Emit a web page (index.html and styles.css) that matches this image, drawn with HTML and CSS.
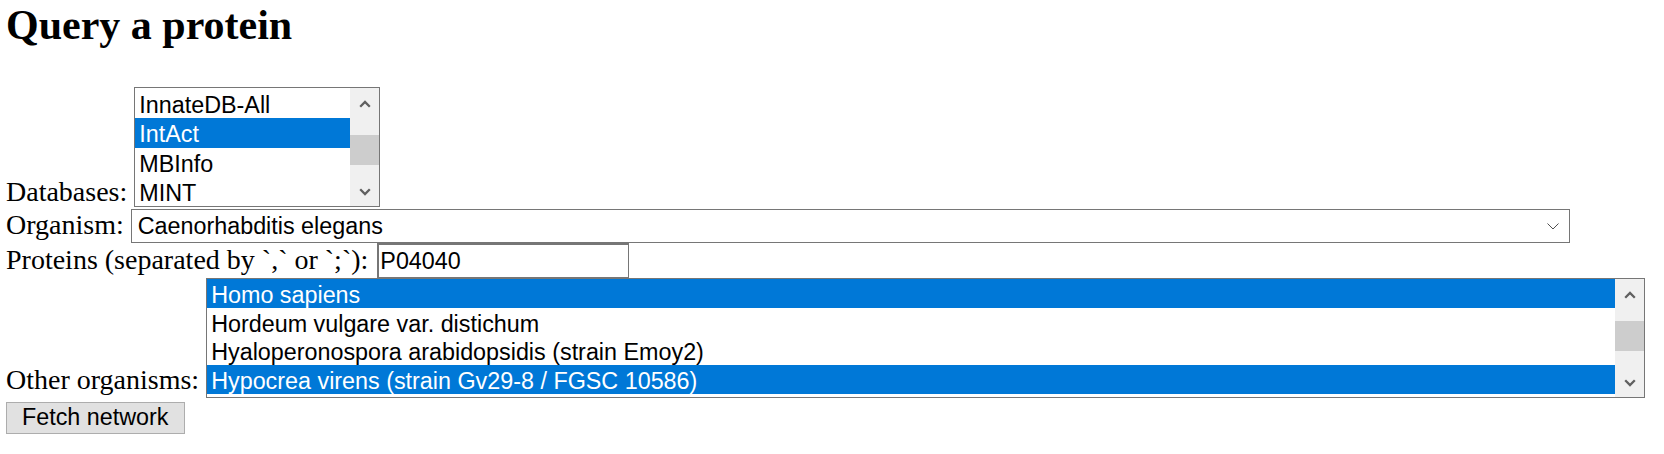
FILE: index.html
```
<!DOCTYPE html>
<html lang="en">
<head>
<meta charset="utf-8">
<title>Query a protein</title>
<link rel="stylesheet" href="styles.css">
</head>
<body>
<h2 class="title">Query a protein</h2>
<form class="query" action="#" onsubmit="return false;">
  <div class="row row-db">Databases: <div class="listbox listbox-db" role="listbox" aria-multiselectable="true">
      <div class="vscroll">
        <div class="sb-btn sb-up"><svg class="sb-arrow" width="12" height="8" viewBox="0 0 12 8"><polyline points="1.2,6.8 6,2 10.8,6.8"/></svg></div>
        <div class="sb-track"><div class="sb-thumb" style="margin-top:18px"></div></div>
        <div class="sb-btn sb-down"><svg class="sb-arrow" width="12" height="8" viewBox="0 0 12 8"><polyline points="1.2,1.2 6,6 10.8,1.2"/></svg></div>
      </div>
      <div class="opts opts-db">
        <div class="opt">InnateDB-All</div>
        <div class="opt selected">IntAct</div>
        <div class="opt">MBInfo</div>
        <div class="opt">MINT</div>
      </div>
    </div></div>
  <div class="row row-organism">Organism: <div class="select" role="combobox"><span class="select-value">Caenorhabditis elegans</span><svg class="select-chevron" width="12" height="7" viewBox="0 0 12 7"><polyline points="0.5,0.5 6,6 11.5,0.5"/></svg></div></div>
  <div class="row row-proteins">Proteins (separated by `,` or `;`): <input class="text-input" type="text" value="P04040"></div>
  <div class="row row-others">Other organisms: <div class="listbox listbox-org" role="listbox" aria-multiselectable="true">
      <div class="vscroll">
        <div class="sb-btn sb-up"><svg class="sb-arrow" width="12" height="8" viewBox="0 0 12 8"><polyline points="1.2,6.8 6,2 10.8,6.8"/></svg></div>
        <div class="sb-track"><div class="sb-thumb" style="margin-top:13px"></div></div>
        <div class="sb-btn sb-down"><svg class="sb-arrow" width="12" height="8" viewBox="0 0 12 8"><polyline points="1.2,1.2 6,6 10.8,1.2"/></svg></div>
      </div>
      <div class="opts opts-org">
        <div class="opt selected">Homo sapiens</div>
        <div class="opt">Hordeum vulgare var. distichum</div>
        <div class="opt">Hyaloperonospora arabidopsidis (strain Emoy2)</div>
        <div class="opt selected">Hypocrea virens (strain Gv29-8 / FGSC 10586)</div>
      </div>
    </div></div>
  <div class="row row-submit"><button class="btn" type="submit">Fetch network</button></div>
</form>
</body>
</html>
```
FILE: styles.css
```
* {
  box-sizing: border-box;
}

html {
  background: #ffffff;
}

body {
  margin: 0;
  padding: 1px 0 0 6px;
  font-family: "Liberation Serif", "Times New Roman", serif;
  font-size: 28px;
  color: #000000;
}

.title {
  font-size: 42px;
  font-weight: bold;
  margin: 0 0 38px 0;
}

.query {
  margin: 0;
}

.row {
  white-space: nowrap;
}

/* ---------- list boxes ---------- */
.listbox {
  display: inline-block;
  vertical-align: baseline;
  height: 120px;
  border: 1px solid #767676;
  background: #ffffff;
  font-family: "Liberation Sans", Arial, sans-serif;
  font-size: 23.33px;
  white-space: nowrap;
}

.listbox-db {
  width: 246px;
}

.listbox-org {
  width: 1439px;
}

.vscroll {
  float: right;
  width: 29px;
  height: 100%;
  background: #f0f0f0;
  display: flex;
  flex-direction: column;
}

.sb-btn {
  flex: none;
  height: 29px;
  display: flex;
  align-items: center;
  justify-content: center;
}

.sb-up {
  padding-top: 3px;
}

.sb-track {
  flex: 1;
}

.sb-thumb {
  height: 29.5px;
  background: #cdcdcd;
}

.sb-arrow polyline {
  fill: none;
  stroke: #606060;
  stroke-width: 2.3;
}

.opts {
  margin-right: 29px;
}

.opts-db {
  padding-top: 1px;
}

.opt {
  padding: 2px 0 0 4px;
}

.opts-db .opt {
  height: 29.25px;
  line-height: 29.25px;
}

.opts-org .opt {
  height: 28.6px;
  line-height: 28.6px;
}

.opt.selected {
  background: #0078d7;
  color: #ffffff;
}

/* ---------- single select ---------- */
.select {
  display: inline-flex;
  align-items: center;
  justify-content: space-between;
  vertical-align: baseline;
  width: 1439px;
  height: 34.5px;
  margin-top: 1px;
  padding: 0 10px 0 6px;
  border: 1px solid #767676;
  background: #ffffff;
  font-family: "Liberation Sans", Arial, sans-serif;
  font-size: 23.33px;
}

.select-chevron polyline {
  fill: none;
  stroke: #505050;
  stroke-width: 1;
}

/* ---------- text input ---------- */
.text-input {
  vertical-align: baseline;
  width: 252px;
  height: 35px;
  margin: 0 0 0 2px;
  padding: 0 1px;
  border: 1px solid #767676;
  border-top-width: 2px;
  border-left-width: 2px;
  border-radius: 0;
  background: #ffffff;
  font-family: "Liberation Sans", Arial, sans-serif;
  font-size: 23.33px;
  color: #000000;
  outline: none;
}

/* ---------- button ---------- */
.row-submit {
  padding-top: 2px;
}

.btn {
  vertical-align: baseline;
  height: 32px;
  margin: 0;
  padding: 0 15px;
  border: 1px solid #adadad;
  border-radius: 0;
  background: #e1e1e1;
  font-family: "Liberation Sans", Arial, sans-serif;
  font-size: 23.33px;
  color: #000000;
}
```
